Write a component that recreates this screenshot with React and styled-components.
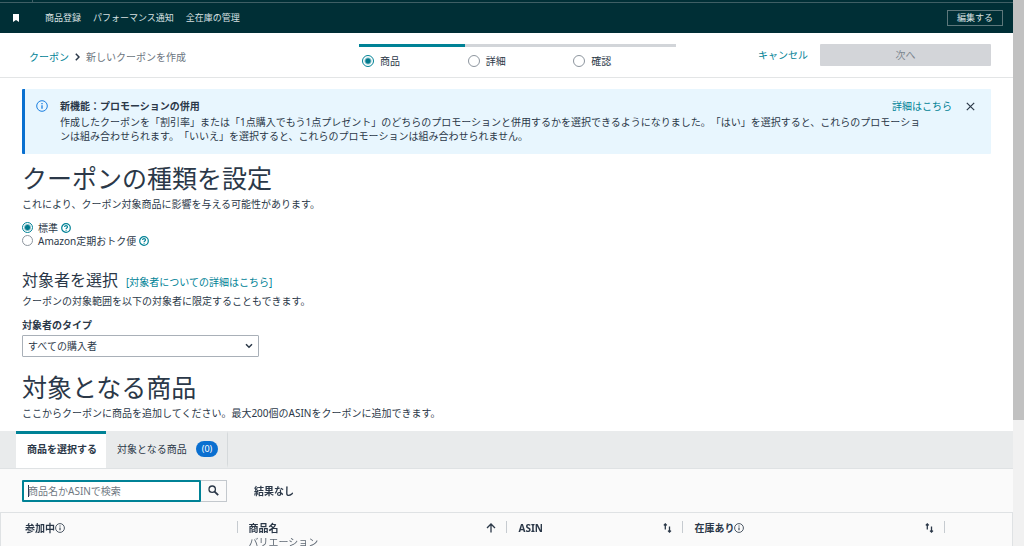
import React, { useState } from "react";
import styled, { createGlobalStyle } from "styled-components";

const GlobalStyle = createGlobalStyle`
  * {
    box-sizing: border-box;
  }
  body {
    margin: 0;
    background: #fff;
    color: #2b3848;
    font-family: "Noto Sans", "Noto Sans CJK JP", sans-serif;
    font-size: 10px;
    line-height: 14px;
    text-spacing-trim: space-all;
  }
  button, input, select {
    font: inherit;
    color: inherit;
  }
  h1, h2, p {
    margin: 0;
  }
  svg {
    display: block;
    flex: none;
  }
`;

const Shell = styled.div`
  display: flex;
  height: 100vh;
  overflow: hidden;
`;

const Page = styled.div`
  flex: 1;
  min-width: 0;
`;

const ScrollTrack = styled.div`
  width: 11px;
  background: #f1f1f1;
`;

const ScrollThumb = styled.div`
  height: 77%;
  background: #c1c1c1;
`;

const TopStrip = styled.div`
  height: 3px;
  padding-left: 32px;
  background: #002f36;
  border-bottom: 1px solid #3f5f65;
`;

const StripDivider = styled.div`
  width: 1px;
  height: 2px;
  background: #3f5f65;
`;

const NavBar = styled.nav`
  display: flex;
  align-items: center;
  height: 30px;
  padding: 0 10px 0 13px;
  background: #002f36;
  color: #d9e1e2;
  font-size: 9px;
`;

const NavLinks = styled.div`
  display: flex;
  flex: 1;
  gap: 12px;
  margin-left: 26px;
`;

const NavLink = styled.a`
  color: inherit;
  text-decoration: none;
`;

const EditButton = styled.button`
  height: 16px;
  padding: 0 9px;
  background: transparent;
  border: 1px solid #5d777b;
  line-height: 12px;
`;

const SubHeader = styled.header`
  display: grid;
  grid-template-columns: 330fr 317fr 315fr;
  align-items: start;
  height: 45px;
  padding: 11px 22px 0 29px;
  border-bottom: 1px solid #e3e5e6;
`;

const Breadcrumb = styled.div`
  display: flex;
  align-items: center;
  gap: 6px;
  padding-top: 6px;
  color: #6c7580;
`;

const TextLink = styled.a`
  color: #008296;
  text-decoration: none;
`;

const Steps = styled.div`
  display: grid;
  grid-template-columns: repeat(3, 1fr);
`;

const Step = styled.label`
  display: flex;
  align-items: center;
  gap: 6px;
  padding: 7px 0 0 3px;
  border-top: 3px solid ${(p) => (p.$active ? "#008296" : "#d2d5d9")};
`;

const Radio = styled.input.attrs({ type: "radio" })`
  appearance: none;
  flex: none;
  width: ${(p) => p.$size || 12}px;
  height: ${(p) => p.$size || 12}px;
  margin: 0;
  border: 1px solid #8d959e;
  border-radius: 50%;
  background: #fff;

  &:checked {
    border-color: #008296;
    background: radial-gradient(circle, #007a8d 2px, #fff 4px);
  }
`;

const Actions = styled.div`
  display: flex;
  align-items: center;
  justify-content: flex-end;
  gap: 12px;
`;

const NextButton = styled.button`
  width: 171px;
  height: 22px;
  padding: 0;
  background: #d3d5d9;
  border: 0;
  border-radius: 1px;
  color: #7c858f;
`;

const Alert = styled.section`
  display: flex;
  gap: 12px;
  margin: 11px 22px 0;
  padding: 9px 16px 11px 11px;
  background: #e8f6fe;
  border-left: 3px solid #0a70d0;
  border-radius: 1px;
`;

const AlertIcon = styled.div`
  padding-top: 2px;
`;

const AlertContent = styled.div`
  flex: 1;
`;

const AlertHead = styled.div`
  display: flex;
  align-items: center;
  gap: 14px;
  height: 16px;
  margin-bottom: 1px;
`;

const AlertTitle = styled.strong`
  flex: 1;
`;

const AlertText = styled.p`
  padding-right: 48px;
`;

const IconButton = styled.button`
  padding: 0;
  background: none;
  border: 0;
`;

const Content = styled.main`
  padding: 9px 22px 11px;
`;

const Title = styled.h1`
  margin-bottom: 4px;
  font-size: 25px;
  font-weight: 400;
  line-height: 30px;
`;

const SectionHead = styled.div`
  display: flex;
  align-items: baseline;
  gap: 8px;
  margin: 23px 0 4px;
`;

const SectionTitle = styled.h2`
  font-size: 16px;
  font-weight: 400;
  line-height: 20px;
`;

const RadioGroup = styled.div`
  display: flex;
  flex-direction: column;
  margin-top: 10px;
`;

const RadioRow = styled.div`
  display: flex;
  align-items: center;
  gap: 3px;
  height: 13px;
`;

const RadioLabel = styled.label`
  display: flex;
  align-items: center;
  gap: 5px;
`;

const FieldLabel = styled.label`
  display: block;
  margin: 10px 0 3px;
  font-weight: 700;
`;

const SelectBox = styled.div`
  position: relative;
  width: 237px;
  margin-bottom: 15px;

  svg {
    position: absolute;
    right: 6px;
    top: 8px;
    pointer-events: none;
  }
`;

const Select = styled.select`
  appearance: none;
  display: block;
  width: 100%;
  height: 22px;
  padding: 0 20px 0 5px;
  background: #fff;
  border: 1px solid #a9b0b8;
  border-radius: 1px;
`;

const Tabs = styled.div`
  display: flex;
  height: 37px;
  padding-left: 16px;
  background: #e9ebec;
`;

const Tab = styled.button`
  display: flex;
  align-items: center;
  gap: 9px;
  padding: 0 9px 0 11px;
  border: 0;
  border-top: 3px solid ${(p) => (p.$active ? "#008296" : "transparent")};
  border-bottom: 4px solid transparent;
  border-right: ${(p) => (p.$active ? "0" : "1px solid #d5d9db")};
  background: ${(p) => (p.$active ? "#fff" : "transparent")};
  font-weight: ${(p) => (p.$active ? 700 : 400)};
`;

const Badge = styled.span`
  padding: 0 6px;
  background: #0a6fd0;
  border-radius: 8px;
  color: #fff;
  font-size: 9px;
  line-height: 16px;
`;

const Toolbar = styled.div`
  display: flex;
  align-items: center;
  height: 44px;
  padding: 0 22px;
  background: #fafafa;
  border-top: 1px solid #dfe2e4;
`;

const SearchInput = styled.input`
  width: 179px;
  height: 22px;
  padding: 0 4px;
  background: #fff;
  border: 2px solid #008296;
  border-radius: 1px;
  outline: 0;
  caret-color: transparent;

  &:placeholder-shown {
    background: linear-gradient(#2b3848, #2b3848) 4px center / 1px 12px no-repeat #fff;
  }

  &:not(:placeholder-shown) {
    caret-color: auto;
  }

  &::placeholder {
    color: #6f7882;
    opacity: 1;
  }
`;

const SearchButton = styled.button`
  display: flex;
  align-items: center;
  justify-content: center;
  width: 26px;
  height: 22px;
  padding: 0;
  background: #fafafa;
  border: 1px solid #c3c8cd;
  border-left: 0;
`;

const ResultText = styled.strong`
  margin-left: 27px;
`;

const Table = styled.table`
  width: 100%;
  table-layout: fixed;
  border-collapse: separate;
  border-spacing: 0;
  background: #fafafa;
  border: 1px solid #dfe2e4;
`;

const HeadCell = styled.th`
  width: ${(p) => p.$width};
  padding: 8px 0 0 ${(p) => p.$indent || 11}px;
  text-align: left;
  vertical-align: top;
`;

const HeadInner = styled.div`
  display: flex;
  align-items: flex-start;
`;

const HeadText = styled.div`
  flex: 1;
`;

const HeadLabel = styled.div`
  display: flex;
  align-items: center;
`;

const SubLabel = styled.div`
  color: #5f6974;
  font-weight: 400;
`;

const SortButton = styled(IconButton)`
  padding: 2px 0;
  margin-right: 10px;
`;

const Separator = styled.span`
  width: 1px;
  height: 12px;
  background: #c6cbd0;
`;

function InfoIcon({ size = 10, color = "#2b3848" }) {
  return (
    <svg width={size} height={size} viewBox="0 0 12 12" fill="none" stroke={color}>
      <circle cx="6" cy="6" r="5.3" />
      <path d="M6 5.3v3.4M6 3v1.2" strokeWidth="1.3" />
    </svg>
  );
}

function HelpIcon() {
  return (
    <svg width="10" height="10" viewBox="0 0 10 10" fill="none" stroke="#008296" strokeWidth="1.2">
      <circle cx="5" cy="5" r="4.3" />
      <path d="M3.6 4c0-1.9 2.9-1.7 2.9-.1 0 1-1.4 1-1.4 2M5.1 6.8v1" />
    </svg>
  );
}

function SortIcon() {
  return (
    <svg width="9" height="10" viewBox="0 0 9 10" fill="none" stroke="#2b3848" strokeWidth="1.3">
      <path d="M2.3 6.5V1M.8 2.4L2.3.9l1.5 1.5M6.5 3.5v5.6M5 7.6l1.5 1.5L8 7.6" />
    </svg>
  );
}

function ArrowUpIcon() {
  return (
    <svg width="10" height="10" viewBox="0 0 10 10" fill="none" stroke="#2b3848" strokeWidth="1.3">
      <path d="M5 9.6V1M1 5l4-4 4 4" />
    </svg>
  );
}

const steps = ["商品", "詳細", "確認"];

const columns = [
  { label: "参加中", width: "23.4%", indent: 24, info: true },
  { label: "商品名", sub: "バリエーション", width: "26.7%", sort: <ArrowUpIcon /> },
  { label: "ASIN", width: "17.4%", sort: <SortIcon /> },
  { label: "在庫あり", width: "25.9%", info: true, sort: <SortIcon /> },
];

function App() {
  const [step, setStep] = useState(0);
  const [kind, setKind] = useState("standard");
  const [tab, setTab] = useState("select");

  return (
    <>
      <GlobalStyle />
      <Shell>
        <Page>
          <TopStrip>
            <StripDivider />
          </TopStrip>
          <NavBar>
            <svg width="6" height="8" viewBox="0 0 6 8" fill="#fff">
              <path d="M0 0h6v8L3 6 0 8z" />
            </svg>
            <NavLinks>
              <NavLink href="#add">商品登録</NavLink>
              <NavLink href="#performance">パフォーマンス通知</NavLink>
              <NavLink href="#inventory">全在庫の管理</NavLink>
            </NavLinks>
            <EditButton>編集する</EditButton>
          </NavBar>

          <SubHeader>
            <Breadcrumb>
              <TextLink href="#coupons">クーポン</TextLink>
              <svg width="5" height="8" viewBox="0 0 5 8" fill="none" stroke="#2b3848" strokeWidth="1.5">
                <path d="M.8.8L4 4 .8 7.2" />
              </svg>
              <span>新しいクーポンを作成</span>
            </Breadcrumb>
            <Steps>
              {steps.map((name, i) => (
                <Step key={name} $active={step === i}>
                  <Radio name="step" checked={step === i} onChange={() => setStep(i)} />
                  {name}
                </Step>
              ))}
            </Steps>
            <Actions>
              <TextLink href="#cancel">キャンセル</TextLink>
              <NextButton disabled>次へ</NextButton>
            </Actions>
          </SubHeader>

          <Alert>
            <AlertIcon>
              <InfoIcon size={12} color="#1a7fe0" />
            </AlertIcon>
            <AlertContent>
              <AlertHead>
                <AlertTitle>新機能：プロモーションの併用</AlertTitle>
                <TextLink href="#details">詳細はこちら</TextLink>
                <IconButton aria-label="閉じる">
                  <svg width="9" height="9" viewBox="0 0 9 9" stroke="#2b3848" strokeWidth="1.2">
                    <path d="M.8.8l7.4 7.4M8.2.8L.8 8.2" />
                  </svg>
                </IconButton>
              </AlertHead>
              <AlertText>
                作成したクーポンを「割引率」または「1点購入でもう1点プレゼント」のどちらのプロモーションと併用するかを選択できるようになりました。「はい」を選択すると、これらのプロモーションは組み合わせられます。「いいえ」を選択すると、これらのプロモーションは組み合わせられません。
              </AlertText>
            </AlertContent>
          </Alert>

          <Content>
            <Title>クーポンの種類を設定</Title>
            <p>これにより、クーポン対象商品に影響を与える可能性があります。</p>
            <RadioGroup>
              <RadioRow>
                <RadioLabel>
                  <Radio
                    $size={11}
                    name="kind"
                    checked={kind === "standard"}
                    onChange={() => setKind("standard")}
                  />
                  標準
                </RadioLabel>
                <HelpIcon />
              </RadioRow>
              <RadioRow>
                <RadioLabel>
                  <Radio
                    $size={11}
                    name="kind"
                    checked={kind === "subscribe"}
                    onChange={() => setKind("subscribe")}
                  />
                  Amazon定期おトク便
                </RadioLabel>
                <HelpIcon />
              </RadioRow>
            </RadioGroup>

            <SectionHead>
              <SectionTitle>対象者を選択</SectionTitle>
              <TextLink href="#audience">[対象者についての詳細はこちら]</TextLink>
            </SectionHead>
            <p>クーポンの対象範囲を以下の対象者に限定することもできます。</p>
            <FieldLabel htmlFor="audience-type">対象者のタイプ</FieldLabel>
            <SelectBox>
              <Select id="audience-type">
                <option>すべての購入者</option>
              </Select>
              <svg width="8" height="6" viewBox="0 0 8 6" fill="none" stroke="#2b3848" strokeWidth="1.5">
                <path d="M1 1.2l3 3 3-3" />
              </svg>
            </SelectBox>

            <Title>対象となる商品</Title>
            <p>ここからクーポンに商品を追加してください。最大200個のASINをクーポンに追加できます。</p>
          </Content>

          <Tabs>
            <Tab $active={tab === "select"} onClick={() => setTab("select")}>
              商品を選択する
            </Tab>
            <Tab $active={tab === "added"} onClick={() => setTab("added")}>
              対象となる商品
              <Badge>(0)</Badge>
            </Tab>
          </Tabs>
          <Toolbar>
            <SearchInput autoFocus aria-label="商品を検索" placeholder="商品名かASINで検索" />
            <SearchButton aria-label="検索">
              <svg width="11" height="11" viewBox="0 0 11 11" fill="none" stroke="#2b3848">
                <circle cx="4.2" cy="4.2" r="3.2" strokeWidth="1.3" />
                <path d="M6.6 6.6l3.6 3.6" strokeWidth="1.8" />
              </svg>
            </SearchButton>
            <ResultText>結果なし</ResultText>
          </Toolbar>
          <Table>
            <thead>
              <tr>
                {columns.map((col) => (
                  <HeadCell key={col.label} $width={col.width} $indent={col.indent}>
                    <HeadInner>
                      <HeadText>
                        <HeadLabel>
                          {col.label}
                          {col.info && <InfoIcon />}
                        </HeadLabel>
                        {col.sub && <SubLabel>{col.sub}</SubLabel>}
                      </HeadText>
                      {col.sort && <SortButton aria-label="並べ替え">{col.sort}</SortButton>}
                      <Separator />
                    </HeadInner>
                  </HeadCell>
                ))}
                <HeadCell as="td" />
              </tr>
            </thead>
          </Table>
        </Page>
        <ScrollTrack>
          <ScrollThumb />
        </ScrollTrack>
      </Shell>
    </>
  );
}

export default App;
